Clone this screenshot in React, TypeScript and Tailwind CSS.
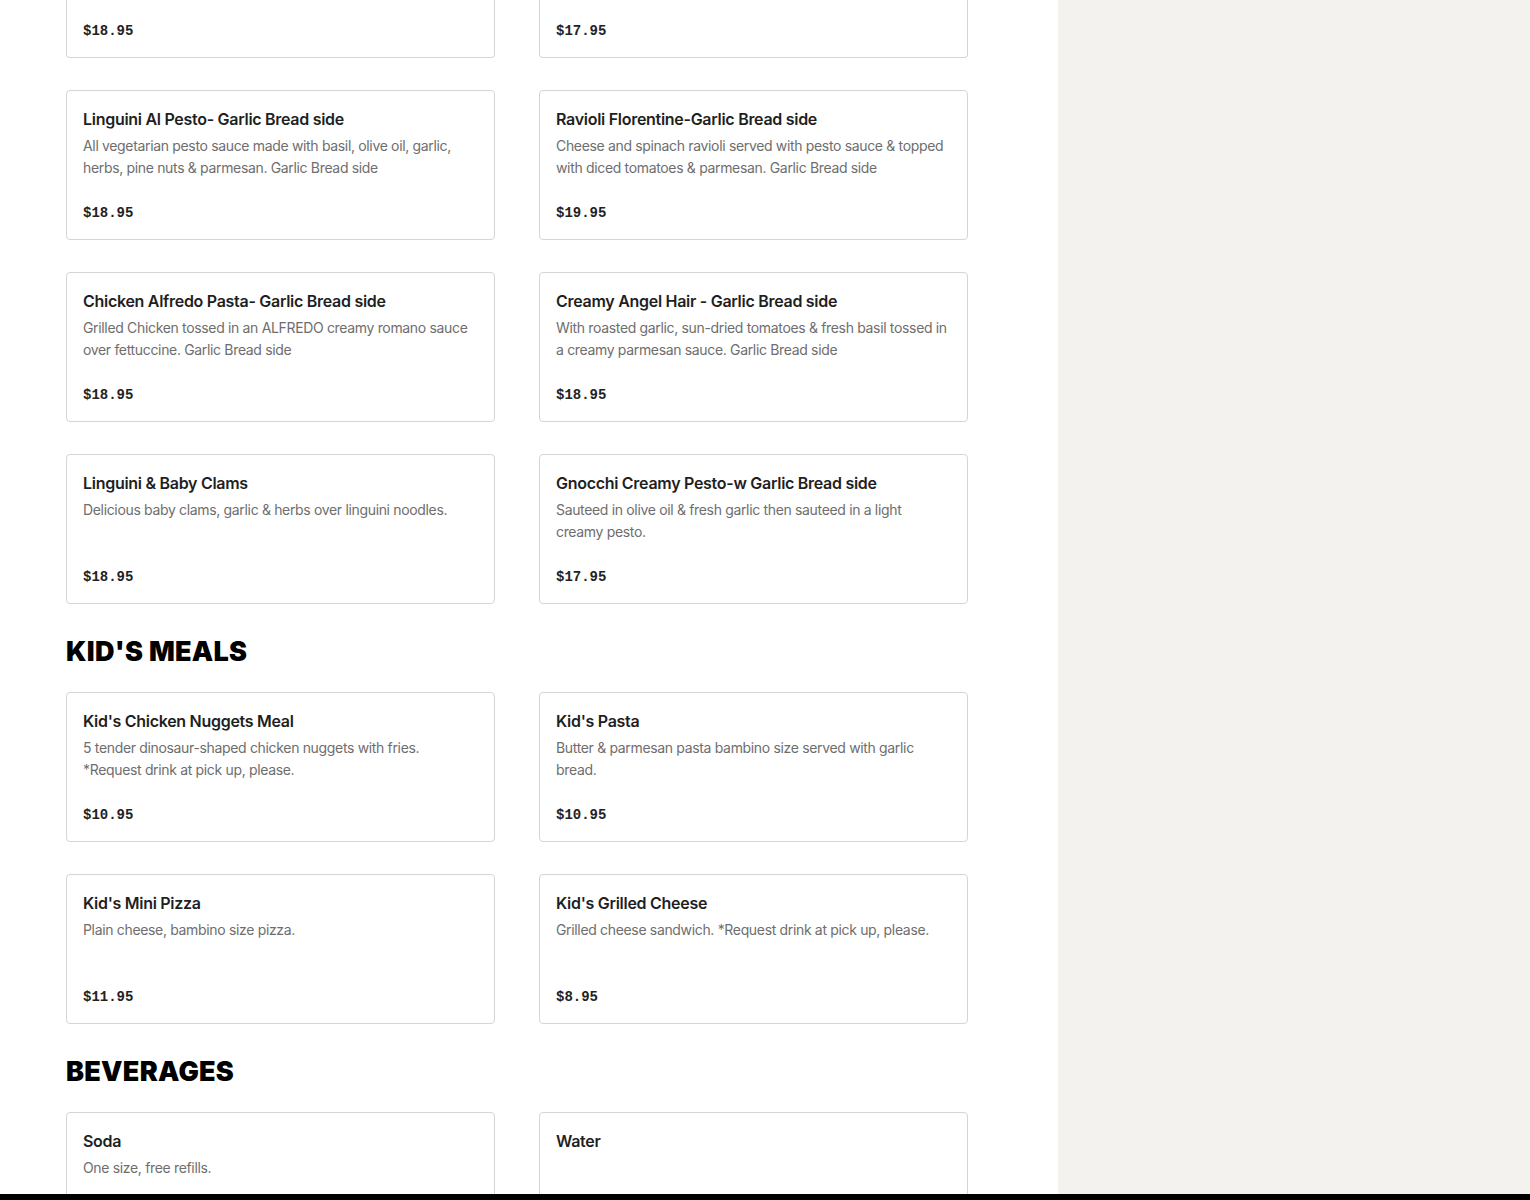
type Item = { name: string; desc?: string; price: string };

const pasta: Item[] = [
  {
    name: "Linguini Al Pesto- Garlic Bread side",
    desc: "All vegetarian pesto sauce made with basil, olive oil, garlic, herbs, pine nuts & parmesan. Garlic Bread side",
    price: "$18.95",
  },
  {
    name: "Ravioli Florentine-Garlic Bread side",
    desc: "Cheese and spinach ravioli served with pesto sauce & topped with diced tomatoes & parmesan. Garlic Bread side",
    price: "$19.95",
  },
  {
    name: "Chicken Alfredo Pasta- Garlic Bread side",
    desc: "Grilled Chicken tossed in an ALFREDO creamy romano sauce over fettuccine. Garlic Bread side",
    price: "$18.95",
  },
  {
    name: "Creamy Angel Hair - Garlic Bread side",
    desc: "With roasted garlic, sun-dried tomatoes & fresh basil tossed in a creamy parmesan sauce. Garlic Bread side",
    price: "$18.95",
  },
  {
    name: "Linguini & Baby Clams",
    desc: "Delicious baby clams, garlic & herbs over linguini noodles.",
    price: "$18.95",
  },
  {
    name: "Gnocchi Creamy Pesto-w Garlic Bread side",
    desc: "Sauteed in olive oil & fresh garlic then sauteed in a light creamy pesto.",
    price: "$17.95",
  },
];

const kids: Item[] = [
  {
    name: "Kid's Chicken Nuggets Meal",
    desc: "5 tender dinosaur-shaped chicken nuggets with fries. *Request drink at pick up, please.",
    price: "$10.95",
  },
  {
    name: "Kid's Pasta",
    desc: "Butter & parmesan pasta bambino size served with garlic bread.",
    price: "$10.95",
  },
  { name: "Kid's Mini Pizza", desc: "Plain cheese, bambino size pizza.", price: "$11.95" },
  {
    name: "Kid's Grilled Cheese",
    desc: "Grilled cheese sandwich. *Request drink at pick up, please.",
    price: "$8.95",
  },
];

const drinks: Item[] = [
  { name: "Soda", desc: "One size, free refills.", price: "" },
  { name: "Water", price: "" },
];

const sans = "font-['Inter','Liberation_Sans',sans-serif]";

function Price({ value }: { value: string }) {
  return (
    <p className="mt-auto translate-y-px text-[14px] leading-[22px] font-bold text-[#222] font-['Liberation_Mono',monospace]">
      {value}
    </p>
  );
}

function Card({ item }: { item: Item }) {
  return (
    <div className="h-[150px] flex flex-col border border-[#d5d5d5] rounded-[4px] bg-white px-4 pt-4 pb-4">
      <h3 className={`${sans} text-[16px] leading-6 font-semibold tracking-[-0.018em] text-[#1f1f1f]`}>
        {item.name}
      </h3>
      {item.desc && (
        <p className={`${sans} mt-1 text-[14px] leading-[22px] tracking-[-0.024em] text-[#6e6e6e]`}>
          {item.desc}
        </p>
      )}
      {item.price && <Price value={item.price} />}
    </div>
  );
}

// card cut off by the scroll position, only its price shows
function CutCard({ price }: { price: string }) {
  return (
    <div className="h-[58px] flex flex-col border border-t-0 border-[#d5d5d5] rounded-b-[4px] bg-white px-4 pb-4">
      <Price value={price} />
    </div>
  );
}

function Heading({ children }: { children: string }) {
  return (
    <h2 className={`${sans} mt-8 mb-6 text-[27px] leading-8 font-black tracking-[0.01em] text-black`}>
      {children}
    </h2>
  );
}

function Grid({ items }: { items: Item[] }) {
  return (
    <div className="grid grid-cols-2 gap-x-[44px] gap-y-8">
      {items.map((it) => (
        <Card key={it.name} item={it} />
      ))}
    </div>
  );
}

export default function App() {
  return (
    <div className="h-[1200px] flex flex-col bg-white">
      <div className="flex-1 flex overflow-hidden">
        <main className="w-[1058px] shrink-0 bg-white">
          <div className="ml-[66px] w-[902px]">
            {/* Pasta */}
            <div className="grid grid-cols-2 gap-x-[44px] gap-y-8">
              <CutCard price="$18.95" />
              <CutCard price="$17.95" />
              {pasta.map((it) => (
                <Card key={it.name} item={it} />
              ))}
            </div>

            <Heading>KID'S MEALS</Heading>
            <Grid items={kids} />

            <Heading>BEVERAGES</Heading>
            <Grid items={drinks} />
          </div>
        </main>
        <aside className="flex-1 bg-[#f3f2ef]" />
      </div>
      <div className="h-[6px] bg-black" />
    </div>
  );
}
